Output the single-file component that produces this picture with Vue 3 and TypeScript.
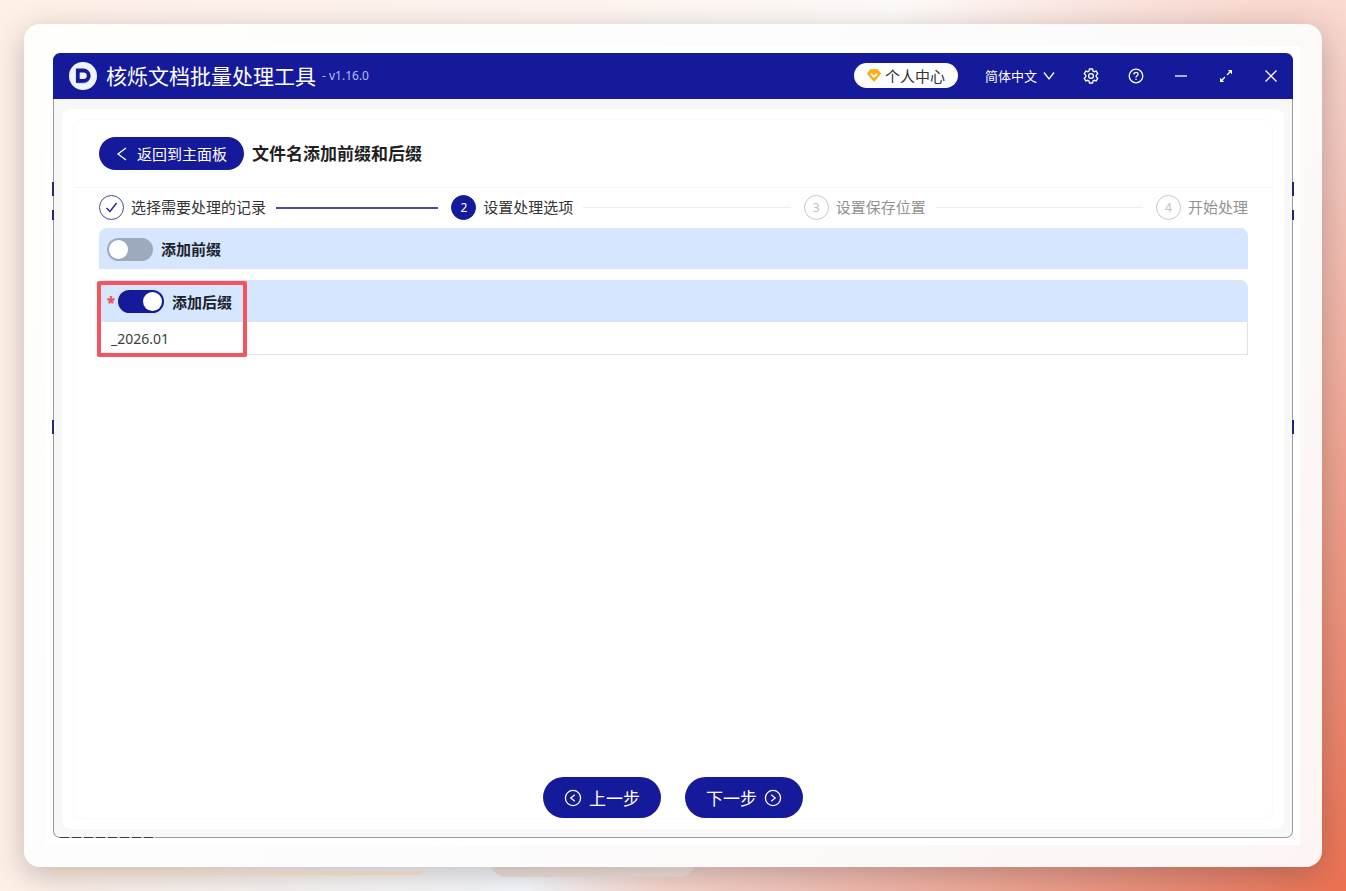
<script setup lang="ts">
import { ref } from 'vue'

interface Step {
  title: string
  state: 'done' | 'active' | 'wait'
}

const steps: Step[] = [
  { title: '选择需要处理的记录', state: 'done' },
  { title: '设置处理选项', state: 'active' },
  { title: '设置保存位置', state: 'wait' },
  { title: '开始处理', state: 'wait' },
]

const language = ref('zh')
const prefixOn = ref(false)
const suffixOn = ref(true)
const suffix = ref('_2026.01')
</script>

<template>
  <div class="stage">
    <span class="decor bar"></span>
    <span class="decor blob"></span>
    <div class="frame">
      <div class="mat">
        <div class="window">
          <i class="edge e1"></i><i class="edge e2"></i><i class="edge e3"></i>
          <i class="edge right e1"></i><i class="edge right e2"></i><i class="edge right e3"></i>
          <i class="under"></i>
          <header class="titlebar">
            <svg class="logo" viewBox="0 0 28 28" aria-hidden="true">
              <circle cx="14" cy="14" r="14" fill="#f1f2fb" />
              <path d="M9.500 9.500h5a5 5 0 0 1 0 10h-5z" fill="none" stroke="#b3b5d0" stroke-width="4" />
              <path d="M8.800 8.500h5.700a5.200 5.200 0 0 1 0 10.400H8.800z" fill="#f1f2fb" stroke="#151a9b" stroke-width="3.800" />
            </svg>
            <h1>核烁文档批量处理工具</h1>
            <span class="version">- v1.16.0</span>
            <button class="account" type="button">
              <svg width="14" height="13" viewBox="0 0 14 13" aria-hidden="true">
                <path d="M3.500.8h7L13.400 4.600 7 12 .6 4.600z" fill="#fbad15" stroke="#fbad15" stroke-width="1.200" stroke-linejoin="round" />
                <path d="M3.900 4.600 7 7.800l3.100-3.200" fill="none" stroke="#fff" stroke-width="1.700" />
              </svg>
              个人中心
            </button>
            <div class="language">
              <select v-model="language" aria-label="语言">
                <option value="zh">简体中文</option>
              </select>
              <svg width="12" height="12" viewBox="0 0 12 12" aria-hidden="true"><path d="M1 2.500 6 9l5-6.500" /></svg>
            </div>
            <nav class="tools">
              <button type="button" aria-label="设置">
                <svg viewBox="0 0 16 16"><path d="M6.500 1h3l.5 2 1.200.7 2-.6 1.500 2.600-1.500 1.500v1.600l1.500 1.500-1.500 2.600-2-.6-1.200.7-.5 2h-3L6 13l-1.200-.7-2 .6-1.500-2.600 1.500-1.500V7.200L1.300 5.700l1.500-2.600 2 .6L6 3z" /><circle cx="8" cy="8" r="2.400" /></svg>
              </button>
              <button type="button" aria-label="帮助">
                <svg viewBox="0 0 16 16"><circle cx="8" cy="8" r="6.800" /><path d="M5.900 6.500C5.900 5.100 6.800 4.300 8 4.300s2.100.8 2.100 2c0 1.500-2.100 1.500-2.100 3.200M8 10.700v1.200" /></svg>
              </button>
              <button type="button" aria-label="最小化">
                <svg viewBox="0 0 16 16"><path d="M2 8h12" /></svg>
              </button>
              <button type="button" aria-label="最大化">
                <svg viewBox="0 0 16 16"><path d="M9 7l4-4M7 9l-4 4" /><path class="solid" d="M9.800 2H14v4.200zM2 9.800V14h4.200z" /></svg>
              </button>
              <button type="button" aria-label="关闭">
                <svg viewBox="0 0 16 16"><path d="M2.500 2.500l11 11m0-11l-11 11" /></svg>
              </button>
            </nav>
          </header>

          <div class="body">
            <div class="panel">
              <main class="card">
                <div class="card-head">
                  <button class="back" type="button">
                    <svg width="12" height="14" viewBox="0 0 12 14" aria-hidden="true"><path d="M10 1 2 7l8 6" /></svg>
                    返回到主面板
                  </button>
                  <h2>文件名添加前缀和后缀</h2>
                </div>

                <ol class="steps">
                  <li v-for="(step, i) in steps" :key="step.title" :class="step.state">
                    <span class="dot">
                      <svg v-if="step.state === 'done'" width="13" height="13" viewBox="0 0 13 13" aria-hidden="true"><path d="M1.500 7 5 10.500 11.500 2" /></svg>
                      <template v-else>{{ i + 1 }}</template>
                    </span>
                    <span class="step-title">{{ step.title }}</span>
                    <span v-if="i < steps.length - 1" class="line"></span>
                  </li>
                </ol>

                <form class="options" @submit.prevent>
                  <label class="option-row">
                    <input v-model="prefixOn" class="switch" type="checkbox" />
                    <span>添加前缀</span>
                  </label>
                  <div class="option">
                    <label class="option-row tall">
                      <b class="required">*</b>
                      <input v-model="suffixOn" class="switch" type="checkbox" />
                      <span>添加后缀</span>
                    </label>
                    <input v-model="suffix" class="field" type="text" aria-label="添加后缀" />
                    <span class="highlight"></span>
                  </div>
                </form>

                <div class="actions">
                  <button type="button">
                    <svg width="18" height="18" viewBox="0 0 18 18" aria-hidden="true"><circle cx="9" cy="9" r="7.600" /><path d="M10.800 5.800 6.800 9l4 3.200" /></svg>
                    上一步
                  </button>
                  <button type="button">
                    下一步
                    <svg width="18" height="18" viewBox="0 0 18 18" aria-hidden="true"><circle cx="9" cy="9" r="7.600" /><path d="M7.200 5.800l4 3.200-4 3.200" /></svg>
                  </button>
                </div>
              </main>
            </div>
          </div>
        </div>
      </div>
    </div>
  </div>
</template>

<style>
body {
  margin: 0;
}
</style>

<style scoped>
* {
  box-sizing: border-box;
}
.stage {
  position: relative;
  display: flex;
  min-height: 100vh;
  padding: 24px;
  overflow: hidden;
  font-family: "Noto Sans", "Noto Sans CJK SC", sans-serif;
  color: #333;
  background:
    radial-gradient(ellipse 820px 1050px at 100% 100%, #ec7150 0, #ec8a73 20%, #f1a896 44%, #f5c8be 70%, #f9d8cf 84%, rgba(255, 255, 255, 0) 100%),
    radial-gradient(ellipse 500px 200px at 40% 100%, #f8fbff 0, rgba(248, 251, 255, 0) 100%),
    linear-gradient(90deg, #fff0e7 0, #fef5f0 45%, #fff 84%);
}
button,
select,
input {
  margin: 0;
  font-family: inherit;
}
button {
  display: flex;
  align-items: center;
  justify-content: center;
  padding: 0;
  border: 0;
  background: none;
  color: #fff;
  white-space: nowrap;
  cursor: pointer;
}
svg {
  flex: none;
}
.decor {
  position: absolute;
}
.bar {
  left: 52px;
  bottom: 16px;
  width: 371px;
  height: 4px;
  border-radius: 2px;
  background: #e9cfba;
  z-index: 1;
}
.blob {
  left: 490px;
  bottom: 14px;
  width: 205px;
  height: 40px;
  border-radius: 16px;
  background: #f6e6dc;
}
.frame {
  position: relative;
  display: flex;
  flex: 1;
  min-width: 0;
  padding: 22px;
  border-radius: 16px;
  background: linear-gradient(125deg, #fefefd 0, #fcfcfc 50%, #fcf5f3 100%);
  box-shadow: 0 8px 32px rgba(50, 50, 60, 0.3);
}
.mat {
  display: flex;
  flex: 1;
  min-width: 0;
  padding: 7px;
  background: #fff;
}
.window {
  position: relative;
  display: flex;
  flex: 1;
  flex-direction: column;
  min-width: 0;
  border: 1px solid #9b9b9f;
  border-top-color: #151a9b;
  border-radius: 7px;
  background: #f8f8f8;
}
.edge {
  position: absolute;
  left: -2px;
  width: 2px;
  height: 14px;
  background: #23286f;
}
.edge.right {
  right: -2px;
  left: auto;
}
.e1 {
  top: 128px;
}
.e2 {
  top: 156px;
  height: 10px;
}
.e3 {
  top: 366px;
}
.under {
  position: absolute;
  bottom: -1px;
  left: 6px;
  width: 96px;
  height: 1px;
  background: repeating-linear-gradient(90deg, #3a3c4c 0 9px, #b5b5bb 9px 12px);
}
.titlebar {
  display: flex;
  align-items: center;
  height: 45px;
  margin: 0 -1px;
  padding: 0 0 2px 16px;
  border-radius: 6px 6px 0 0;
  background: #151a9b;
  color: #fff;
}
.logo {
  width: 28px;
  height: 28px;
}
h1 {
  margin: 0 6px 0 9px;
  font-size: 21px;
  font-weight: 400;
  line-height: 30px;
  white-space: nowrap;
}
.version {
  margin-right: auto;
  font-size: 12px;
  color: #b8baf0;
  white-space: nowrap;
}
.account {
  gap: 4px;
  width: 104px;
  height: 25px;
  border-radius: 13px;
  background: #fff;
  color: #333;
  font-size: 15px;
  line-height: 20px;
}
.language {
  display: grid;
  align-items: center;
  width: 70px;
  margin: 0 13px 0 27px;
}
.language select {
  grid-area: 1 / 1;
  width: 100%;
  height: 24px;
  padding: 0;
  border: 0;
  appearance: none;
  background: none;
  color: #fff;
  font-size: 13px;
}
.language option {
  color: #333;
}
.language svg {
  grid-area: 1 / 1;
  justify-self: end;
  pointer-events: none;
}
.language path,
.tools svg,
.back path,
.dot path,
.actions svg {
  fill: none;
  stroke: currentColor;
  stroke-width: 1.3;
}
.tools {
  display: flex;
}
.tools button {
  width: 45px;
  height: 43px;
}
.tools svg {
  width: 16px;
  height: 16px;
}
.tools .solid {
  fill: #fff;
  stroke: none;
}
.body {
  display: flex;
  flex: 1;
  padding: 10px 8px 8px;
}
.panel {
  display: flex;
  flex: 1;
  min-width: 0;
  padding: 10px 11px;
  border-radius: 8px;
  background: #fff;
}
.card {
  display: flex;
  flex: 1;
  flex-direction: column;
  min-width: 0;
  border: 1px solid #fafafa;
  border-radius: 8px;
}
.card-head {
  display: flex;
  align-items: center;
  gap: 8px;
  height: 68px;
  padding: 0 25px;
  border-bottom: 1px solid #f5f5f5;
}
.back {
  gap: 9px;
  width: 145px;
  height: 33px;
  border-radius: 17px;
  background: #151a9b;
  font-size: 15px;
}
h2 {
  margin: 0;
  font-size: 17px;
  line-height: 24px;
  color: #1f1f1f;
}
.steps {
  display: flex;
  margin: 7px 24px 8px 25px;
  padding: 0;
  list-style: none;
}
.steps li {
  display: flex;
  flex: 1;
  align-items: center;
  font-size: 15px;
  line-height: 25px;
  white-space: nowrap;
}
.steps li:last-child {
  flex: none;
}
.dot {
  display: flex;
  flex: none;
  align-items: center;
  justify-content: center;
  width: 25px;
  height: 25px;
  margin-right: 7px;
  border: 1px solid #c8c8c8;
  border-radius: 50%;
  color: #c0c0c0;
  font-size: 12px;
}
.done .dot {
  border-color: #4d4aa6;
  color: #151a9b;
}
.active .dot {
  border-color: #151a9b;
  background: #151a9b;
  color: #fff;
}
.wait .step-title {
  color: #929292;
}
.line {
  flex: 1;
  height: 1px;
  margin: 0 13px 0 10px;
  background: #ececec;
}
.done .line {
  height: 2px;
  background: #4d4aa6;
}
.options {
  display: flex;
  flex-direction: column;
  gap: 11px;
  margin: 0 24px 0 25px;
}
.option {
  position: relative;
}
.option-row {
  display: flex;
  align-items: center;
  height: 41px;
  padding: 1px 8px 0;
  border-radius: 8px 8px 0 0;
  background: #d6e6ff;
  color: #1b222d;
  font-size: 15px;
  line-height: 20px;
  font-weight: 700;
}
.option-row.tall {
  height: 42px;
}
.required {
  width: 11px;
  color: #f04f5b;
}
.switch {
  display: flex;
  align-items: center;
  width: 46px;
  height: 23px;
  margin-right: 8px;
  padding: 2px;
  border-radius: 12px;
  appearance: none;
  background: #9da9be;
}
.switch::before {
  width: 19px;
  height: 19px;
  border-radius: 50%;
  background: #fff;
  content: "";
}
.switch:checked {
  justify-content: flex-end;
  background: #151a9b;
}
.field {
  display: block;
  width: 100%;
  height: 33px;
  padding: 0 11px;
  border: 1px solid #e2e2e2;
  border-top: 0;
  outline: 0;
  background: #fff;
  color: #3c3c3c;
  font-size: 14px;
}
.highlight {
  position: absolute;
  top: 1px;
  left: -2px;
  width: 150px;
  height: 76px;
  border: 4px solid #f8525c;
  border-radius: 2px;
  pointer-events: none;
}
.actions {
  display: flex;
  justify-content: center;
  gap: 24px;
  margin-top: auto;
}
.actions button {
  gap: 7px;
  width: 118px;
  height: 41px;
  border-radius: 21px;
  background: #151a9b;
  font-size: 17px;
}
</style>
